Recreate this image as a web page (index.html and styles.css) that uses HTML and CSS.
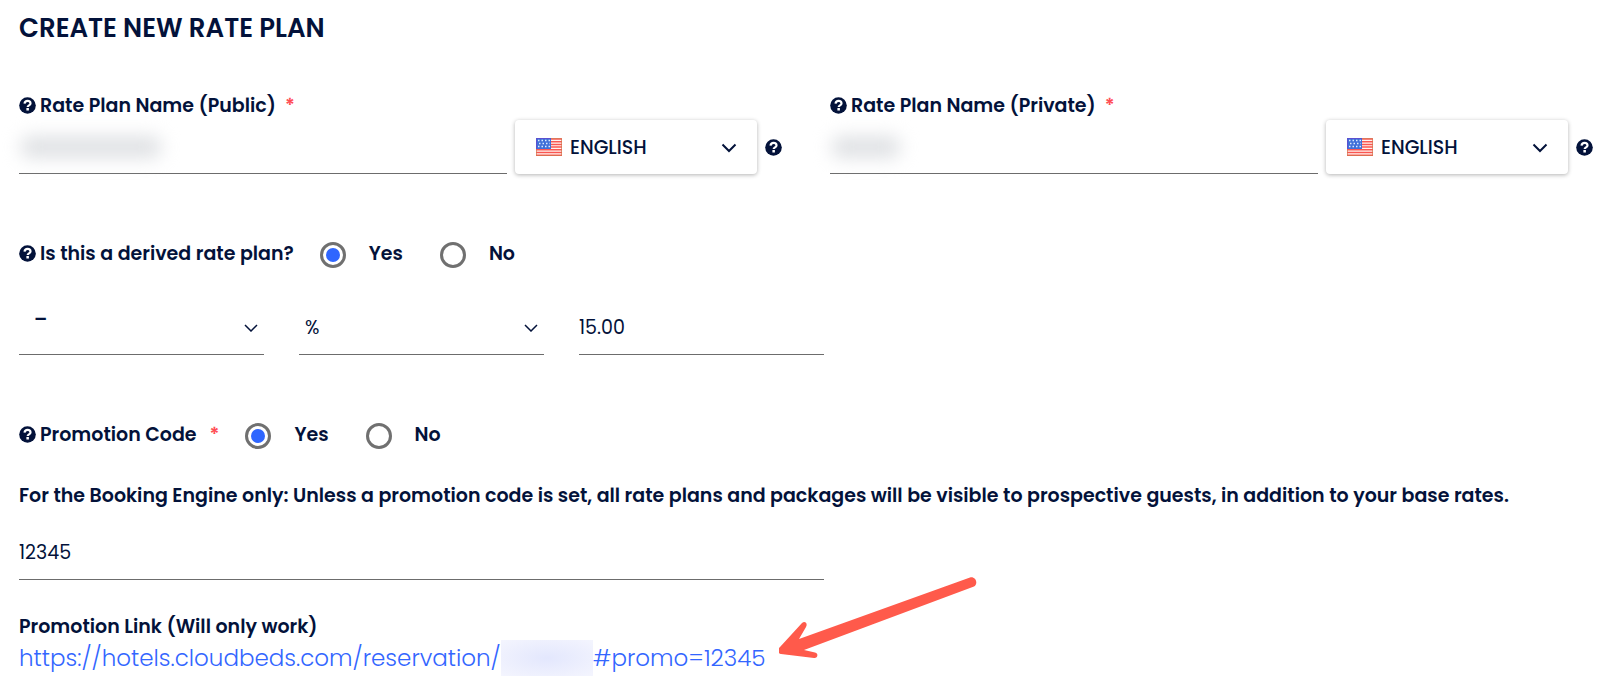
FILE: index.html
```html
<!DOCTYPE html>
<html lang="en">
<head>
<meta charset="utf-8">
<title>Create New Rate Plan</title>
<link rel="stylesheet" href="styles.css">
</head>
<body>
<svg class="defs" width="0" height="0" aria-hidden="true">
  <symbol id="help" viewBox="0 0 17 17">
    <circle cx="8.500" cy="8.500" r="8.300" fill="#03123a"/>
    <path d="M5.500 6.600C5.800 4.700 7 3.900 8.500 3.900c1.700 0 3 1 3 2.500 0 2-2.800 1.900-2.800 3.600" fill="none" stroke="#fff" stroke-width="2.200"/>
    <rect x="7.400" y="11" width="2.500" height="2.500" fill="#fff"/>
  </symbol>
  <symbol id="chevron" viewBox="0 0 16 10">
    <path d="M1.500 1.500 8 8l6.500-6.500" fill="none" stroke="#03123a" stroke-width="2"/>
  </symbol>
  <symbol id="chevron-thin" viewBox="0 0 14 8">
    <path d="M1 1l6 6 6-6" fill="none" stroke="#03123a" stroke-width="1.500"/>
  </symbol>
  <symbol id="flag" viewBox="0 0 26 18">
    <rect width="26" height="18" fill="#fff4ee"/>
    <path d="M0 1h26M0 3.700h26M0 6.400h26M0 9.100h26M0 11.800h26M0 14.500h26M0 17.200h26" stroke="#fa5652" stroke-width="1.500"/>
    <rect width="15" height="11" fill="#3f6fd8"/>
    <path d="M2 2.500h12M3 5.500h11M2 8.500h12" stroke="#dceaff" stroke-width="1.300" stroke-dasharray="1.500 2"/>
    <path d="M.5 11V.5H15" fill="none" stroke="#5b50d0"/>
    <path d="M15 .5h10.500v17H.5V11" fill="none" stroke="#d0764f" stroke-opacity=".7"/>
  </symbol>
</svg>
<main class="page">
  <h1 class="title">CREATE NEW RATE PLAN</h1>

  <div class="names">
    <section>
      <div class="label-row">
        <svg class="help"><use href="#help"/></svg>
        <label for="public-name">Rate Plan Name (Public)</label>
        <span class="required">*</span>
      </div>
      <div class="name-row">
        <div class="name-field">
          <input class="line-input" id="public-name" type="text">
          <span class="redacted"></span>
        </div>
        <div class="language">
          <svg class="flag"><use href="#flag"/></svg>
          <select class="language-select" aria-label="Public name language"><option>ENGLISH</option></select>
          <svg class="chevron"><use href="#chevron"/></svg>
        </div>
        <svg class="help"><use href="#help"/></svg>
      </div>
    </section>
    <section>
      <div class="label-row">
        <svg class="help"><use href="#help"/></svg>
        <label for="private-name">Rate Plan Name (Private)</label>
        <span class="required">*</span>
      </div>
      <div class="name-row">
        <div class="name-field">
          <input class="line-input" id="private-name" type="text">
          <span class="redacted redacted-short"></span>
        </div>
        <div class="language">
          <svg class="flag"><use href="#flag"/></svg>
          <select class="language-select" aria-label="Private name language"><option>ENGLISH</option></select>
          <svg class="chevron"><use href="#chevron"/></svg>
        </div>
        <svg class="help"><use href="#help"/></svg>
      </div>
    </section>
  </div>

  <div class="choice-row" role="radiogroup" aria-labelledby="derived">
    <svg class="help"><use href="#help"/></svg>
    <span id="derived">Is this a derived rate plan?</span>
    <span class="choices">
      <label class="choice"><input class="radio" type="radio" name="derived" checked>Yes</label>
      <label class="choice"><input class="radio" type="radio" name="derived">No</label>
    </span>
  </div>

  <div class="derived">
    <div class="picker">
      <select class="picker-select picker-sign" aria-label="Adjustment direction"><option>–</option></select>
      <svg class="picker-chevron"><use href="#chevron-thin"/></svg>
    </div>
    <div class="picker">
      <select class="picker-select" aria-label="Adjustment unit"><option>%</option></select>
      <svg class="picker-chevron"><use href="#chevron-thin"/></svg>
    </div>
    <input class="line-input" type="text" value="15.00" aria-label="Adjustment amount">
  </div>

  <div class="choice-row" role="radiogroup" aria-labelledby="promo">
    <svg class="help"><use href="#help"/></svg>
    <span id="promo">Promotion Code</span>
    <span class="required required-wide">*</span>
    <span class="choices">
      <label class="choice"><input class="radio" type="radio" name="promo" checked>Yes</label>
      <label class="choice"><input class="radio" type="radio" name="promo">No</label>
    </span>
  </div>

  <p class="note">For the Booking Engine only: Unless a promotion code is set, all rate plans and packages will be visible to prospective guests, in addition to your base rates.</p>

  <input class="line-input code" type="text" value="12345" aria-label="Promotion code">

  <h2 class="link-title">Promotion Link (Will only work)</h2>
  <div class="link-row">
    <a class="link" href="#promo=12345">https://hotels.cloudbeds.com/reservation/<span class="link-hidden"></span>#promo=12345</a>
    <svg class="arrow" viewBox="0 0 200 84" aria-hidden="true">
      <path d="M191 .5C196-1 200 6 195 9.500L25 73l11 2.500c4 1 2.500 6-1 5.500L2 77c-4-1-3-5-1-7L23 46c3-2.500 6 .5 4 4l-7 12Z" fill="#ff5a4b"/>
    </svg>
  </div>
</main>
</body>
</html>
```
FILE: styles.css
```css
* {
  box-sizing: border-box;
}

body {
  margin: 0;
  background: #fff;
  color: #03123a;
  font-family: Poppins, Inter, "Liberation Sans", sans-serif;
  font-size: 19px;
  line-height: 30px;
}

.defs {
  position: absolute;
}

.page {
  padding: 10px 7px 12px 19px;
}

.title {
  margin: 0;
  font-size: 26px;
  font-weight: 600;
  line-height: 36px;
}

.names {
  display: grid;
  grid-template-columns: 1fr 1fr;
  gap: 48px;
  margin-top: 44px;
}

.label-row,
.choice-row {
  display: flex;
  align-items: center;
  gap: 4px;
  font-weight: 600;
  white-space: nowrap;
}

.label-row,
.choice-row,
.note {
  padding-top: 1px;
  line-height: 29px;
}

.help {
  flex: none;
  width: 17px;
  height: 17px;
}

.required {
  margin-left: 5px;
  color: #ff4d55;
}

.required-wide {
  margin-left: 9px;
}

.name-row {
  display: flex;
  align-items: center;
  gap: 8px;
}

.name-field {
  position: relative;
  flex: 1;
}

.line-input {
  display: block;
  width: 100%;
  height: 54px;
  padding: 0;
  border: 0;
  border-bottom: 1px solid #6c6c6c;
  border-radius: 0;
  background: none;
  color: inherit;
  font: inherit;
  outline: 0;
}

.redacted {
  position: absolute;
  top: 16px;
  left: 2px;
  width: 140px;
  height: 22px;
  border-radius: 8px;
  background: #dfe1e4;
  filter: blur(9px);
}

.redacted-short {
  width: 68px;
}

.language {
  position: relative;
  width: 242px;
}

.language-select {
  display: block;
  width: 100%;
  height: 54px;
  padding: 2px 48px 0 55px;
  appearance: none;
  border: 0;
  border-radius: 4px;
  background: #fff;
  box-shadow: 0 1px 4px #0000004d;
  color: inherit;
  font: inherit;
  font-weight: 500;
}

.flag {
  position: absolute;
  top: 18px;
  left: 21px;
  width: 26px;
  height: 18px;
}

.chevron {
  position: absolute;
  top: 23px;
  right: 20px;
  width: 16px;
  height: 10px;
  pointer-events: none;
}

.choice-row {
  margin-top: 64px;
}

.choices {
  display: flex;
  gap: 37px;
  margin-left: 22px;
}

.choice {
  display: flex;
  align-items: center;
  gap: 23px;
}

.radio {
  display: grid;
  place-items: center;
  width: 26px;
  height: 26px;
  margin: 3px 0 0;
  appearance: none;
  border: 3px solid #707070;
  border-radius: 50%;
}

.radio:checked::before {
  content: "";
  width: 14px;
  height: 14px;
  border-radius: 50%;
  background: #2f66ff;
}

.derived {
  display: grid;
  grid-template-columns: repeat(3, 1fr);
  gap: 35px;
  width: calc(50% + 18px);
  margin-top: 33px;
}

.picker {
  position: relative;
}

.picker-select {
  display: block;
  width: 100%;
  height: 54px;
  padding: 0 32px 0 6px;
  appearance: none;
  border: 0;
  border-bottom: 1px solid #6c6c6c;
  border-radius: 0;
  background: none;
  color: inherit;
  font: inherit;
}

.picker-sign {
  padding: 0 32px 16px 15px;
  font-weight: 600;
}

.picker-chevron {
  position: absolute;
  top: 23px;
  right: 6px;
  width: 14px;
  height: 8px;
  pointer-events: none;
}

.note {
  margin: 31px 0 0;
  font-weight: 600;
}

.code {
  width: calc(50% + 18px);
  margin-top: 16px;
}

.link-title {
  margin: 32px 0 0;
  font-size: 19px;
  font-weight: 600;
}

.link-row {
  position: relative;
  display: flex;
  margin-top: -2px;
}

.link {
  display: flex;
  align-items: center;
  color: #3366ff;
  font-size: 23px;
  font-weight: 300;
  line-height: 36px;
  text-decoration: none;
}

.link-hidden {
  width: 92px;
  height: 36px;
  background: radial-gradient(ellipse, #e3e7fd, #f4f5fe);
}

.arrow {
  position: absolute;
  bottom: 15px;
  left: 760px;
  width: 200px;
  height: 84px;
}
```
